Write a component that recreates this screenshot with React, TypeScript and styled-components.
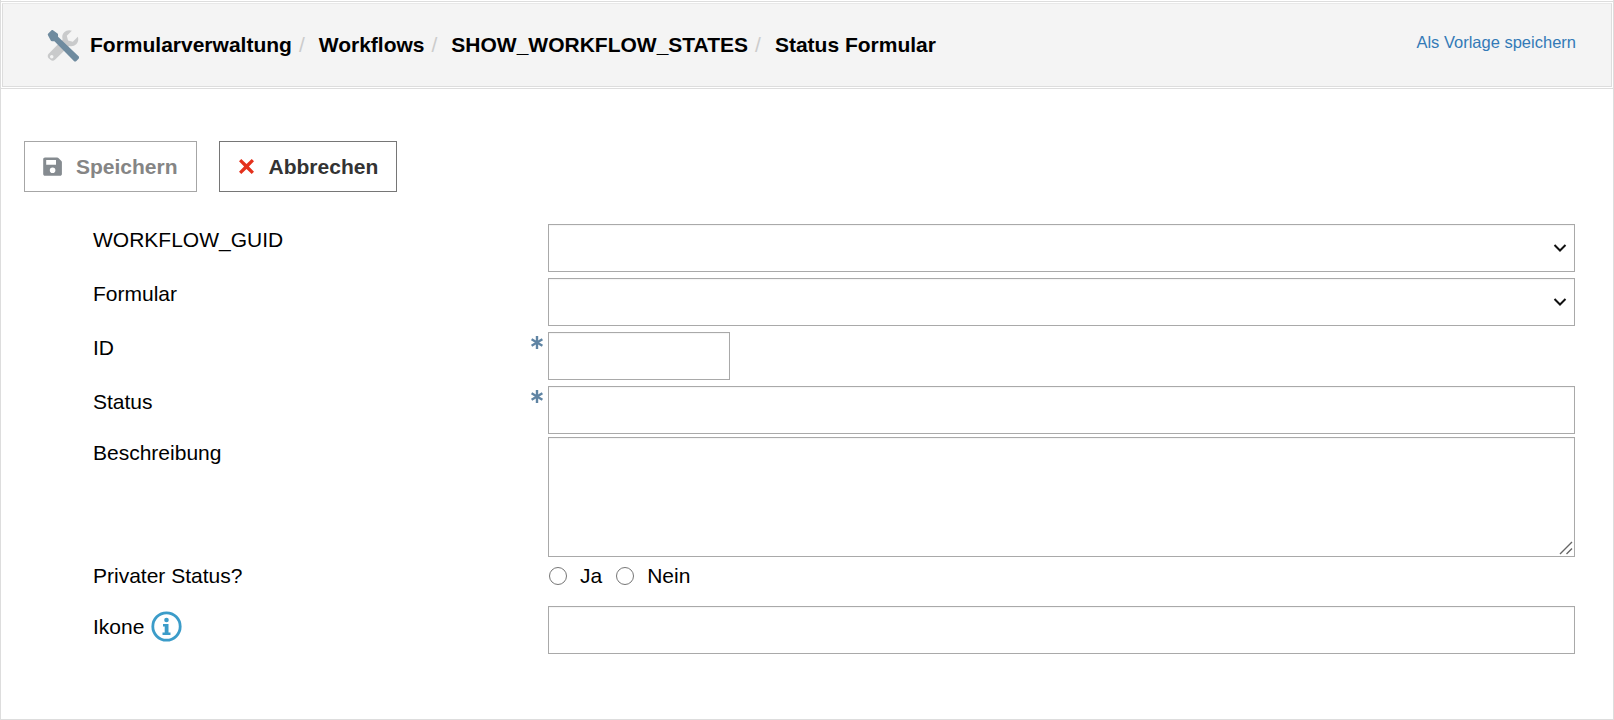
import React from "react";
import styled, { createGlobalStyle } from "styled-components";

const GlobalStyle = createGlobalStyle`
  html, body {
    margin: 0;
    padding: 0;
    background: #fff;
  }
  body {
    font-family: "Liberation Sans", Arial, sans-serif;
    color: #000;
  }
  * {
    box-sizing: border-box;
  }
`;

const Frame = styled.div`
  width: 1614px;
  height: 720px;
  border: 1px solid #ddd;
  border-top: 0;
  padding-top: 1px;
  overflow: hidden;
`;

const Header = styled.header`
  height: 88px;
  border-top: 1px solid #ddd;
  border-bottom: 1px solid #ddd;
  padding: 1px 1px 1px;
`;

const HeaderInner = styled.div`
  height: 100%;
  background: #f4f4f4;
  border: 1px solid #ddd;
  border-top-color: #e8e8e8;
  display: flex;
  align-items: center;
  justify-content: space-between;
  padding: 0 35px 0 44px;
`;

const Breadcrumb = styled.nav`
  display: flex;
  align-items: center;
  font-size: 21px;
  font-weight: 700;
`;

const Crumb = styled.span`
  white-space: nowrap;
`;

const Divider = styled.span`
  color: #ccc;
  font-weight: 400;
  padding: 0 14px 0 7px;
`;

const ToolIcon = styled.svg`
  width: 33px;
  height: 33px;
  margin-right: 10px;
  flex: none;
`;

const TemplateLink = styled.a`
  color: #337ab7;
  font-size: 16.5px;
  text-decoration: none;
  margin-top: -6px;
`;

const Toolbar = styled.div`
  display: flex;
  gap: 22px;
  padding: 52px 0 0 23px;
`;

const Button = styled.button<{ $disabled?: boolean }>`
  height: 51px;
  display: flex;
  align-items: center;
  gap: 14px;
  padding: 0 18px;
  background: #fff;
  border: 1px solid ${(props) => (props.$disabled ? "#a6a6a6" : "#767676")};
  color: ${(props) => (props.$disabled ? "#858585" : "#333")};
  font-family: inherit;
  font-size: 21px;
  font-weight: 700;
`;

const Form = styled.form`
  padding: 32px 37px 0 92px;
`;

const Row = styled.div<{ $gap?: number }>`
  display: flex;
  margin-bottom: ${(props) => props.$gap ?? 6}px;
`;

const Label = styled.label<{ $top?: number }>`
  width: 455px;
  flex: none;
  display: flex;
  justify-content: space-between;
  align-items: flex-start;
  font-size: 21px;
  line-height: 23px;
  padding: ${(props) => props.$top ?? 4}px 5px 0 0;
`;

const LabelText = styled.span`
  display: flex;
  align-items: center;
  gap: 7px;
  min-height: 23px;
`;

const Asterisk = styled.svg`
  width: 12px;
  height: 13px;
`;

const InfoIcon = styled.svg`
  width: 31px;
  height: 31px;
`;

const fieldBorder = `
  border: 1px solid #a9a9a9;
  background: #fff;
  border-radius: 0;
  box-shadow: inset 0 1px 1px rgba(0, 0, 0, 0.04);
`;

const Input = styled.input<{ $short?: boolean }>`
  ${fieldBorder}
  display: block;
  height: 48px;
  width: ${(props) => (props.$short ? "182px" : "1027px")};
`;

const SelectBox = styled.div`
  ${fieldBorder}
  width: 1027px;
  height: 48px;
  display: flex;
  align-items: center;
  justify-content: flex-end;
  padding-right: 7px;
`;

const Chevron = styled.svg`
  width: 14px;
  height: 10px;
`;

const TextAreaWrap = styled.div`
  position: relative;
  width: 1027px;
  height: 120px;
`;

const TextArea = styled.textarea`
  ${fieldBorder}
  display: block;
  width: 100%;
  height: 100%;
  resize: none;
  margin: 0;
`;

const ResizeGrip = styled.svg`
  position: absolute;
  right: 2px;
  bottom: 2px;
  width: 14px;
  height: 14px;
`;

const RadioGroup = styled.div`
  display: flex;
  align-items: center;
  height: 23px;
  font-size: 21px;
  padding-left: 1px;
`;

const Radio = styled.span`
  width: 18px;
  height: 18px;
  border: 1px solid #767676;
  border-radius: 50%;
  background: #fff;
  margin-right: 13px;
`;

const RadioLabel = styled.span`
  margin-right: 14px;
`;

const Wrench = () => (
  <ToolIcon viewBox="0 0 32 32">
    <path
      fill="#c9cacb"
      d="M21.5 1.2c-3.7 0-6.7 3-6.7 6.7 0 .9.2 1.6.4 2.4L1.6 24c-1.2 1.2-1.2 3.1 0 4.3l1.8 1.6c1.2 1.2 3.1 1.2 4.3 0L21.4 16.5c.7.2 1.4.3 2.1.3 3.8 0 6.8-3 6.8-6.8 0-.9-.1-1.6-.4-2.4l-4.9 4.8-4.6-1.2-1.2-4.6 4.9-4.9c-.8-.3-1.7-.5-2.6-.5zM4.6 25.2a1.7 1.7 0 1 1 0 3.4 1.7 1.7 0 0 1 0-3.4z"
    />
    <path
      fill="#6f8b9f"
      d="M1 4.6 4.4 1.2c.4-.4 1-.4 1.4-.1l4.4 3.2c.3.3.5.6.5 1v2.3l19.9 18.8c.7.7.7 1.7 0 2.4l-2.1 2.2c-.7.7-1.8.7-2.4 0L7.2 11.8H4.8c-.4 0-.8-.2-1-.5L.9 6c-.3-.4-.2-1 .1-1.4z"
    />
  </ToolIcon>
);

const SaveIcon = () => (
  <svg width="19" height="19" viewBox="0 0 19 19">
    <path
      fill="#858b90"
      fillRule="evenodd"
      d="M2 .5h12.2c.5 0 .9.2 1.2.5l3 3c.3.3.5.7.5 1.2V17c0 1-.8 1.8-1.8 1.8H2c-1 0-1.8-.8-1.8-1.8V2.3C.2 1.3 1 .5 2 .5zM3.2 3v4.8h9.8V3zM9.6 10.5a2.8 2.8 0 1 0 0 5.6 2.8 2.8 0 0 0 0-5.6z"
    />
  </svg>
);

const CancelIcon = () => (
  <svg width="17" height="17" viewBox="0 0 17 17">
    <path
      fill="#e4311c"
      d="M3.3 1 8.5 6.1 13.7 1 16 3.3 10.9 8.5 16 13.700 13.700 16 8.500 10.900 3.300 16 1 13.700 6.100 8.500 1 3.300z"
    />
  </svg>
);

const Required = () => (
  <Asterisk viewBox="0 0 12 13">
    <g stroke="#5f84a3" strokeWidth="2.4">
      <path d="M6 0v13" />
      <path d="M0.6 3.2l10.8 6.6" />
      <path d="M11.4 3.2l-10.8 6.6" />
    </g>
  </Asterisk>
);

const Info = () => (
  <InfoIcon viewBox="0 0 31 31">
    <circle cx="15.5" cy="15.5" r="13.7" fill="#fff" stroke="#3b9cc9" strokeWidth="2.8" />
    <circle cx="15.5" cy="9" r="2.3" fill="#3b9cc9" />
    <path fill="#3b9cc9" d="M12 13h5.500v8.500h2v2.500h-8v-2.500h2.200v-6H12z" />
  </InfoIcon>
);

const SelectArrow = () => (
  <SelectBox>
    <Chevron viewBox="0 0 14 10">
      <path d="M1.5 2 7 7.5 12.5 2" fill="none" stroke="#111" strokeWidth="2" />
    </Chevron>
  </SelectBox>
);

const App: React.FC = () => {
  return (
    <>
      <GlobalStyle />
      <Frame>
        <Header>
          <HeaderInner>
            <Breadcrumb>
              <Wrench />
              <Crumb>Formularverwaltung</Crumb>
              <Divider>/</Divider>
              <Crumb>Workflows</Crumb>
              <Divider>/</Divider>
              <Crumb>SHOW_WORKFLOW_STATES</Crumb>
              <Divider>/</Divider>
              <Crumb>Status Formular</Crumb>
            </Breadcrumb>
            <TemplateLink href="#">Als Vorlage speichern</TemplateLink>
          </HeaderInner>
        </Header>
        <Toolbar>
          <Button type="button" $disabled>
            <SaveIcon />
            Speichern
          </Button>
          <Button type="button">
            <CancelIcon />
            Abbrechen
          </Button>
        </Toolbar>
        <Form>
          <Row>
            <Label>
              <LabelText>WORKFLOW_GUID</LabelText>
            </Label>
            <SelectArrow />
          </Row>
          <Row>
            <Label>
              <LabelText>Formular</LabelText>
            </Label>
            <SelectArrow />
          </Row>
          <Row>
            <Label>
              <LabelText>ID</LabelText>
              <Required />
            </Label>
            <Input $short />
          </Row>
          <Row $gap={3}>
            <Label>
              <LabelText>Status</LabelText>
              <Required />
            </Label>
            <Input />
          </Row>
          <Row $gap={7}>
            <Label>
              <LabelText>Beschreibung</LabelText>
            </Label>
            <TextAreaWrap>
              <TextArea />
              <ResizeGrip viewBox="0 0 14 14">
                <path d="M1 13 13 1M7.5 13 13 7.5" stroke="#666" strokeWidth="1.4" />
              </ResizeGrip>
            </TextAreaWrap>
          </Row>
          <Row $gap={19}>
            <Label $top={0}>
              <LabelText>Privater Status?</LabelText>
            </Label>
            <RadioGroup>
              <Radio />
              <RadioLabel>Ja</RadioLabel>
              <Radio />
              <span>Nein</span>
            </RadioGroup>
          </Row>
          <Row>
            <Label $top={5}>
              <LabelText>
                Ikone
                <Info />
              </LabelText>
            </Label>
            <Input />
          </Row>
        </Form>
      </Frame>
    </>
  );
};

export default App;
